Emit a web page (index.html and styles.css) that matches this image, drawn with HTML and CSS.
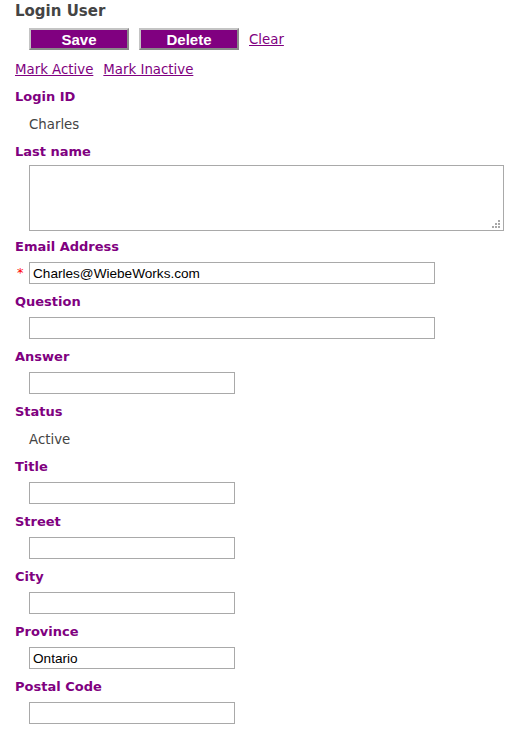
FILE: index.html
```html
<!DOCTYPE html>
<html lang="en">
<head>
<meta charset="utf-8">
<title>Login User</title>
<link rel="stylesheet" href="styles.css">
</head>
<body>
<div class="page">
  <h1 class="title">Login User</h1>
  <div class="actions">
    <button class="btn" type="button">Save</button>
    <button class="btn" type="button">Delete</button>
    <a class="link" href="#">Clear</a>
  </div>
  <div class="marks">
    <a class="link" href="#">Mark Active</a>
    <a class="link" href="#">Mark Inactive</a>
  </div>

  <div class="field">
    <div class="label">Login ID</div>
    <div class="value">Charles</div>
  </div>

  <div class="field">
    <div class="label">Last name</div>
    <div class="row row-area">
      <span class="marker"></span>
      <div class="area-wrap">
        <textarea class="area"></textarea>
        <svg class="grip" width="8" height="8" viewBox="0 0 8 8" aria-hidden="true">
          <rect x="6" y="0" width="2" height="2" fill="#a8a8a8"/>
          <rect x="3" y="3" width="2" height="2" fill="#a8a8a8"/>
          <rect x="6" y="3" width="2" height="2" fill="#a8a8a8"/>
          <rect x="0" y="6" width="2" height="2" fill="#a8a8a8"/>
          <rect x="3" y="6" width="2" height="2" fill="#a8a8a8"/>
          <rect x="6" y="6" width="2" height="2" fill="#a8a8a8"/>
        </svg>
      </div>
    </div>
  </div>

  <div class="field">
    <div class="label">Email Address</div>
    <div class="row">
      <span class="marker req">*</span>
      <input class="input wide" type="text" value="Charles@WiebeWorks.com">
    </div>
  </div>

  <div class="field">
    <div class="label">Question</div>
    <div class="row">
      <span class="marker"></span>
      <input class="input wide" type="text" value="">
    </div>
  </div>

  <div class="field">
    <div class="label">Answer</div>
    <div class="row">
      <span class="marker"></span>
      <input class="input short" type="text" value="">
    </div>
  </div>

  <div class="field">
    <div class="label">Status</div>
    <div class="value">Active</div>
  </div>

  <div class="field">
    <div class="label">Title</div>
    <div class="row">
      <span class="marker"></span>
      <input class="input short" type="text" value="">
    </div>
  </div>

  <div class="field">
    <div class="label">Street</div>
    <div class="row">
      <span class="marker"></span>
      <input class="input short" type="text" value="">
    </div>
  </div>

  <div class="field">
    <div class="label">City</div>
    <div class="row">
      <span class="marker"></span>
      <input class="input short" type="text" value="">
    </div>
  </div>

  <div class="field">
    <div class="label">Province</div>
    <div class="row">
      <span class="marker"></span>
      <input class="input short" type="text" value="Ontario">
    </div>
  </div>

  <div class="field">
    <div class="label">Postal Code</div>
    <div class="row">
      <span class="marker"></span>
      <input class="input short" type="text" value="">
    </div>
  </div>
</div>
</body>
</html>
```

FILE: styles.css
```css
html, body {
  margin: 0;
  padding: 0;
  background: #ffffff;
}

body {
  font-family: "DejaVu Sans", Verdana, sans-serif;
  font-size: 13px;
  color: #444444;
}

.page {
  padding: 0 0 0 15px;
}

.title {
  margin: 0;
  font-size: 15px;
  line-height: 22px;
  font-weight: bold;
  color: #444444;
}

.actions {
  display: flex;
  align-items: center;
  gap: 10px;
  margin-top: 6px;
  padding-left: 14px;
  height: 22px;
}

.btn {
  box-sizing: border-box;
  width: 100px;
  height: 22px;
  margin: 0;
  padding: 0;
  background: #800080;
  color: #ffffff;
  font-family: "Liberation Sans", Arial, sans-serif;
  font-weight: bold;
  font-size: 15px;
  line-height: 17px;
  border-style: solid;
  border-width: 2px;
  border-color: #c4c4c4 #8a8a8a #8a8a8a #c4c4c4;
  cursor: pointer;
}

.link {
  color: #800080;
  text-decoration: underline;
  font-size: 13.33px;
}

.marks {
  display: flex;
  gap: 10px;
  margin-top: 10px;
  height: 20px;
  line-height: 20px;
}

.field {
  padding-bottom: 8px;
}

.marks + .field {
  margin-top: 7px;
}

.label {
  height: 20px;
  line-height: 20px;
  font-weight: bold;
  color: #800080;
}

.value {
  margin-top: 8px;
  height: 20px;
  line-height: 20px;
  padding-left: 14px;
  font-size: 13.33px;
  color: #444444;
}

.field:has(.value) {
  padding-bottom: 7px;
}

.row {
  display: flex;
  align-items: center;
  margin-top: 5px;
}

.row-area {
  margin-top: 3px;
  margin-bottom: -2px;
}

.marker {
  flex: 0 0 14px;
  width: 14px;
  box-sizing: border-box;
  padding-left: 2px;
  font-size: 13px;
  line-height: 14px;
}

.req {
  color: #ff0000;
}

.input {
  box-sizing: border-box;
  height: 22px;
  margin: 0;
  padding: 1px 3px 0 3px;
  border: 1px solid #a9a9a9;
  background: #ffffff;
  font-family: "Liberation Sans", Arial, sans-serif;
  font-size: 13.6px;
  color: #000000;
  outline: none;
}

.wide {
  width: 406px;
}

.short {
  width: 206px;
}

.area-wrap {
  position: relative;
  width: 475px;
  height: 66px;
}

.area {
  box-sizing: border-box;
  display: block;
  width: 475px;
  height: 66px;
  margin: 0;
  border: 1px solid #a9a9a9;
  resize: none;
  font-family: "Liberation Sans", Arial, sans-serif;
  font-size: 13px;
  outline: none;
}

.grip {
  position: absolute;
  right: 4px;
  bottom: 3px;
}
```
